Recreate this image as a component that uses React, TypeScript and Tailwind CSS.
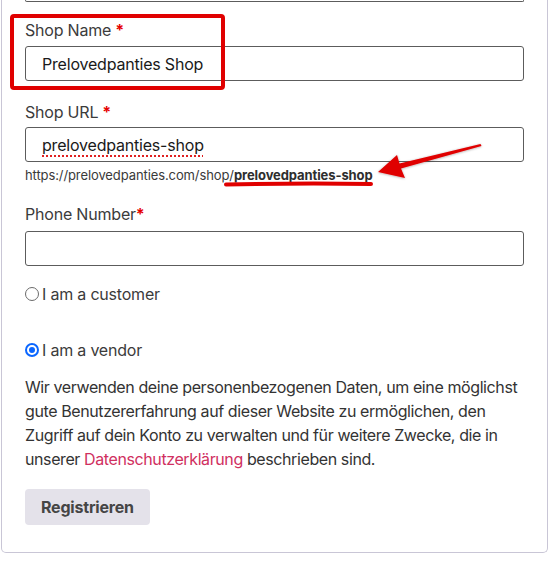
import React from "react";

function Star() {
  return <span className="text-[#e50000] font-bold ml-[4px]">*</span>;
}

function Field({ children }: { children?: React.ReactNode }) {
  return (
    <div className="h-[35px] w-full border border-[#5c5c5c] rounded-[3px] flex items-center pl-[16px] text-[16px] text-[#1a1a1a] bg-white">
      {children}
    </div>
  );
}

function Radio({ checked }: { checked?: boolean }) {
  return checked ? (
    <span className="w-[14px] h-[14px] rounded-full bg-[#0a66ff] flex items-center justify-center mr-[3px]">
      <span className="w-[10px] h-[10px] rounded-full border-[2px] border-white bg-[#0a66ff]" />
    </span>
  ) : (
    <span className="w-[14px] h-[14px] rounded-full border border-[#6b6b6b] bg-white mr-[3px]" />
  );
}

export default function App() {
  return (
    <div
      className="relative w-[558px] h-[565px] bg-white overflow-hidden text-[#3b3b3b] tracking-[-0.2px]"
      style={{ fontFamily: "Inter, 'Noto Sans', sans-serif" }}
    >
      <div className="ml-[1px] w-[547px] h-[553px] border-x border-b border-[#c9c6d6] rounded-b-[5px] px-[23px] flex flex-col">
        <div className="h-[2px] w-full border-x border-b border-[#5c5c5c] rounded-b-[3px]" />

        <div className="mt-[16px] text-[16px] leading-[24px]">
          Shop Name
          <Star />
        </div>
        <div className="mt-[4px]">
          <Field>Prelovedpanties Shop</Field>
        </div>

        <div className="mt-[19px] text-[16px] leading-[24px]">
          Shop URL
          <Star />
        </div>
        <div className="mt-[3px]">
          <Field>
            <span className="underline decoration-dotted decoration-[#e02020] decoration-[1.5px] underline-offset-[5px]">
              prelovedpanties-shop
            </span>
          </Field>
        </div>
        <div className="mt-[4px] text-[13px] leading-[18px] text-[#3a3a3a] tracking-[-0.1px]">
          https://prelovedpanties.com/shop/<b className="font-bold text-[#2e2e2e]">prelovedpanties-shop</b>
        </div>

        <div className="mt-[18px] text-[16px] leading-[24px]">
          Phone Number<span className="text-[#e50000] font-bold">*</span>
        </div>
        <div className="mt-[5px]">
          <Field />
        </div>

        <div className="mt-[16px] flex items-center text-[16px] leading-[24px]">
          <Radio />
          I am a customer
        </div>
        <div className="mt-[32px] flex items-center text-[16px] leading-[24px]">
          <Radio checked />
          I am a vendor
        </div>

        <p className="mt-[13px] text-[16px] leading-[24px] text-[#333] tracking-[-0.4px] whitespace-nowrap">
          Wir verwenden deine personenbezogenen Daten, um eine möglichst
          <br />
          gute Benutzererfahrung auf dieser Website zu ermöglichen, den
          <br />
          Zugriff auf dein Konto zu verwalten und für weitere Zwecke, die in
          <br />
          unserer <span className="text-[#d0305f]">Datenschutzerklärung</span> beschrieben sind.
        </p>

        <div className="mt-[18px]">
          <button className="h-[36px] px-[16px] rounded-[4px] bg-[#e4e2ea] text-[16px] font-bold text-[#454545] tracking-[-0.2px]">
            Registrieren
          </button>
        </div>
      </div>

      {/* annotation: red box */}
      <div className="absolute left-[10px] top-[14px] w-[215px] h-[76px] border-[4px] border-[#e00000] rounded-[4px]" />

      {/* annotation: arrow + underline */}
      <svg className="absolute left-0 top-0" width="558" height="565" viewBox="0 0 558 565">
        <defs>
          <filter id="sh" x="-20%" y="-50%" width="140%" height="200%">
            <feDropShadow dx="0" dy="0.5" stdDeviation="1" floodColor="#000" floodOpacity="0.35" />
          </filter>
        </defs>
        <path
          d="M226 184.5 Q300 183 371 184"
          stroke="#e00000"
          strokeWidth="4"
          strokeLinecap="round"
          fill="none"
        />
        <polygon
          filter="url(#sh)"
          fill="#e00000"
          points="378,172 405,178 401,168.5 481.5,146 480.5,144 399.5,163.5 397,155"
        />
      </svg>
    </div>
  );
}
